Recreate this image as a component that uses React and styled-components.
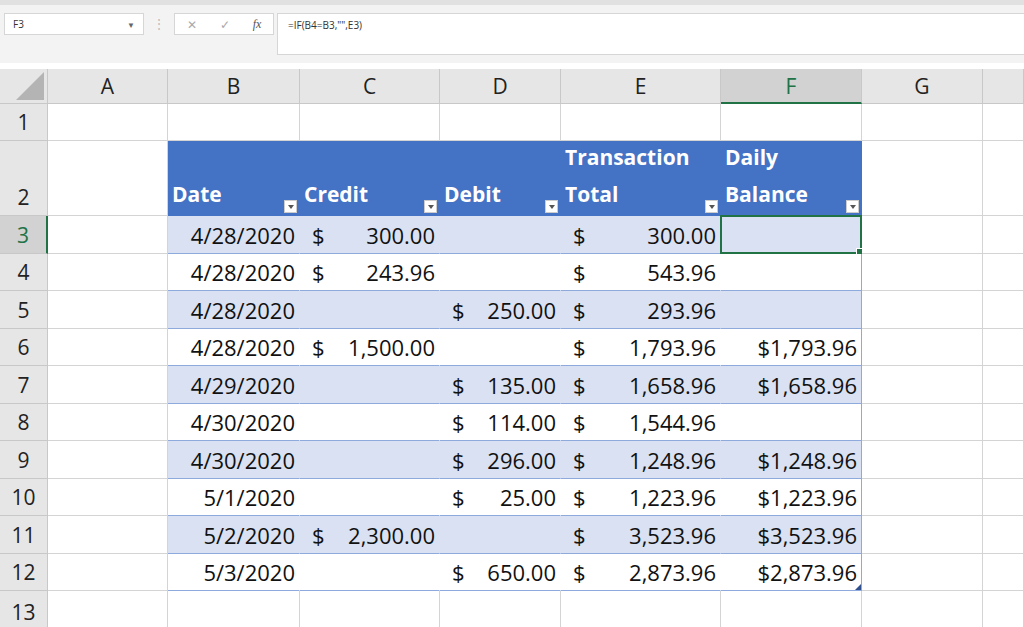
import React from 'react';
import styled, { createGlobalStyle } from 'styled-components';

const Global = createGlobalStyle`
  body { margin: 0; background: #fff; font-family: "Open Sans", "Liberation Sans", sans-serif; overflow: hidden; }
`;

const TopStrip = styled.div`
  height: 5px;
  background: #e1e1e1;
`;

const FormulaBar = styled.div`
  display: flex;
  align-items: flex-start;
  gap: 8px;
  height: 58px;
  padding: 8px 0 0 4px;
  box-sizing: border-box;
  background: #f3f3f3;
`;

const NameBox = styled.div`
  width: 140px;
  height: 22px;
  background: #fff;
  border: 1px solid #d6d6d6;
  display: flex;
  align-items: center;
  justify-content: space-between;
  padding: 0 8px;
  box-sizing: border-box;
  font-size: 10px;
  color: #333;
`;

const Dots = styled.div`
  width: 14px;
  text-align: center;
  color: #bbb;
  font-size: 12px;
  line-height: 22px;
`;

const FxBox = styled.div`
  width: 100px;
  height: 22px;
  background: #fff;
  border: 1px solid #d6d6d6;
  display: flex;
  align-items: center;
  justify-content: space-around;
  box-sizing: border-box;
  font-size: 12px;
  color: #aaa;
`;

const Fx = styled.span`
  font-family: "Liberation Serif", serif;
  font-style: italic;
  color: #555;
`;

const FormulaInput = styled.div`
  flex: 1;
  height: 42px;
  background: #fff;
  border: 1px solid #d6d6d6;
  border-right: none;
  padding: 4px 10px;
  box-sizing: border-box;
  font-size: 10px;
  color: #333;
  margin-left: -5px;
`;

const Gap = styled.div`
  height: 6px;
  background: #fff;
`;

const Sheet = styled.div`
  display: grid;
  grid-template-columns: 48px 120px 132px 140px 121px 160px 141px 121px 1fr;
  grid-template-rows: 35px 37px 75px repeat(10, 37.5px) 40px;
`;

const Corner = styled.div`
  background: #e6e6e6;
  border-right: 1px solid #c8c8c8;
  border-bottom: 1px solid #c8c8c8;
  position: relative;
  &::after {
    content: '';
    position: absolute;
    right: 3px;
    bottom: 3px;
    border-left: 28px solid transparent;
    border-bottom: 28px solid #b4b4b4;
  }
`;

const ColHead = styled.div`
  background: ${p => (p.$active ? '#d2d2d2' : '#e6e6e6')};
  color: ${p => (p.$active ? '#217346' : '#222')};
  border-right: 1px solid #c8c8c8;
  border-bottom: ${p => (p.$active ? '2px solid #217346' : '1px solid #c8c8c8')};
  display: flex;
  align-items: center;
  justify-content: center;
  font-size: 21px;
`;

const RowHead = styled.div`
  background: ${p => (p.$active ? '#d2d2d2' : '#e6e6e6')};
  color: ${p => (p.$active ? '#217346' : '#222')};
  border-right: ${p => (p.$active ? '2px solid #217346' : '1px solid #c8c8c8')};
  border-bottom: 1px solid #c8c8c8;
  display: flex;
  align-items: flex-end;
  justify-content: center;
  padding-bottom: 4px;
  box-sizing: border-box;
  font-size: 21px;
`;

const Cell = styled.div`
  position: relative;
  background: ${p => p.$bg || '#fff'};
  border-right: 1px solid ${p => (p.$table ? 'transparent' : '#d4d4d4')};
  border-bottom: 1px solid ${p => (p.$table ? '#8ea9db' : '#d4d4d4')};
  ${p => p.$edge && 'border-right: 1px solid #8ea9db;'}
  display: flex;
  align-items: flex-end;
  justify-content: ${p => p.$align || 'flex-start'};
  padding: 0 4px 3px;
  box-sizing: border-box;
  font-size: 22px;
  color: #111;
  white-space: nowrap;
`;

const HeadCell = styled.div`
  position: relative;
  background: #4472c4;
  color: #fff;
  font-weight: 700;
  font-size: 21px;
  display: flex;
  flex-direction: column;
  justify-content: flex-end;
  padding: 0 4px 3px;
  box-sizing: border-box;
  line-height: 37px;
`;

const Filter = styled.div`
  position: absolute;
  right: 3px;
  bottom: 3px;
  width: 13px;
  height: 13px;
  background: #fff;
  border: 1px solid #ccc;
  box-sizing: border-box;
  &::after {
    content: '';
    position: absolute;
    left: 3px;
    top: 4px;
    border-left: 3px solid transparent;
    border-right: 3px solid transparent;
    border-top: 4px solid #555;
  }
`;

const Acct = styled.div`
  display: flex;
  justify-content: space-between;
  width: 100%;
  padding-left: ${p => p.$pl || 0}px;
  box-sizing: border-box;
`;

const Selection = styled.div`
  position: absolute;
  inset: -1px -1px -1px -1px;
  border: 2px solid #217346;
  &::after {
    content: '';
    position: absolute;
    right: -4px;
    bottom: -4px;
    width: 6px;
    height: 6px;
    background: #217346;
    border: 1px solid #fff;
  }
`;

const Resize = styled.div`
  position: absolute;
  right: 0;
  bottom: 0;
  border-left: 6px solid transparent;
  border-bottom: 6px solid #2f4f8f;
`;

const cols = ['A', 'B', 'C', 'D', 'E', 'F', 'G', ''];

const rows = [
  ['4/28/2020', '300.00', '', '300.00', ''],
  ['4/28/2020', '243.96', '', '543.96', ''],
  ['4/28/2020', '', '250.00', '293.96', ''],
  ['4/28/2020', '1,500.00', '', '1,793.96', '$1,793.96'],
  ['4/29/2020', '', '135.00', '1,658.96', '$1,658.96'],
  ['4/30/2020', '', '114.00', '1,544.96', ''],
  ['4/30/2020', '', '296.00', '1,248.96', '$1,248.96'],
  ['5/1/2020', '', '25.00', '1,223.96', '$1,223.96'],
  ['5/2/2020', '2,300.00', '', '3,523.96', '$3,523.96'],
  ['5/3/2020', '', '650.00', '2,873.96', '$2,873.96'],
];

const Money = ({ v, pl }) =>
  v ? (
    <Acct $pl={pl}>
      <span>$</span>
      <span>{v}</span>
    </Acct>
  ) : null;

const headers = [['Date'], ['Credit'], ['Debit'], ['Transaction', 'Total'], ['Daily', 'Balance']];

export default function App() {
  return (
    <>
      <Global />
      <TopStrip />
      <FormulaBar>
        <NameBox>
          <span>F3</span>
          <span style={{ fontSize: 8, color: '#666' }}>▼</span>
        </NameBox>
        <Dots>⋮</Dots>
        <FxBox>
          <span>✕</span>
          <span>✓</span>
          <Fx>fx</Fx>
        </FxBox>
        <FormulaInput>=IF(B4=B3,"",E3)</FormulaInput>
      </FormulaBar>
      <Gap />
      <Sheet>
        <Corner />
        {cols.map((c, i) => (
          <ColHead key={i} $active={c === 'F'}>{c}</ColHead>
        ))}

        <RowHead>1</RowHead>
        {cols.map((c, i) => <Cell key={i} />)}

        <RowHead>2</RowHead>
        <Cell />
        {headers.map((h, i) => (
          <HeadCell key={i}>
            {h.map(t => <span key={t}>{t}</span>)}
            <Filter />
          </HeadCell>
        ))}
        <Cell />
        <Cell />

        {rows.map((r, i) => {
          const n = i + 3;
          const bg = i % 2 === 0 ? '#d9e1f2' : '#fff';
          return (
            <React.Fragment key={n}>
              <RowHead $active={n === 3}>{n}</RowHead>
              <Cell />
              <Cell $table $bg={bg} $align="flex-end">{r[0]}</Cell>
              <Cell $table $bg={bg}><Money v={r[1]} pl={8} /></Cell>
              <Cell $table $bg={bg}><Money v={r[2]} pl={8} /></Cell>
              <Cell $table $bg={bg}><Money v={r[3]} pl={8} /></Cell>
              <Cell $table $edge $bg={bg} $align="flex-end">
                {r[4]}
                {n === 3 && <Selection />}
                {n === 12 && <Resize />}
              </Cell>
              <Cell />
              <Cell />
            </React.Fragment>
          );
        })}

        <RowHead>13</RowHead>
        {cols.map((c, i) => <Cell key={i} />)}
      </Sheet>
    </>
  );
}
